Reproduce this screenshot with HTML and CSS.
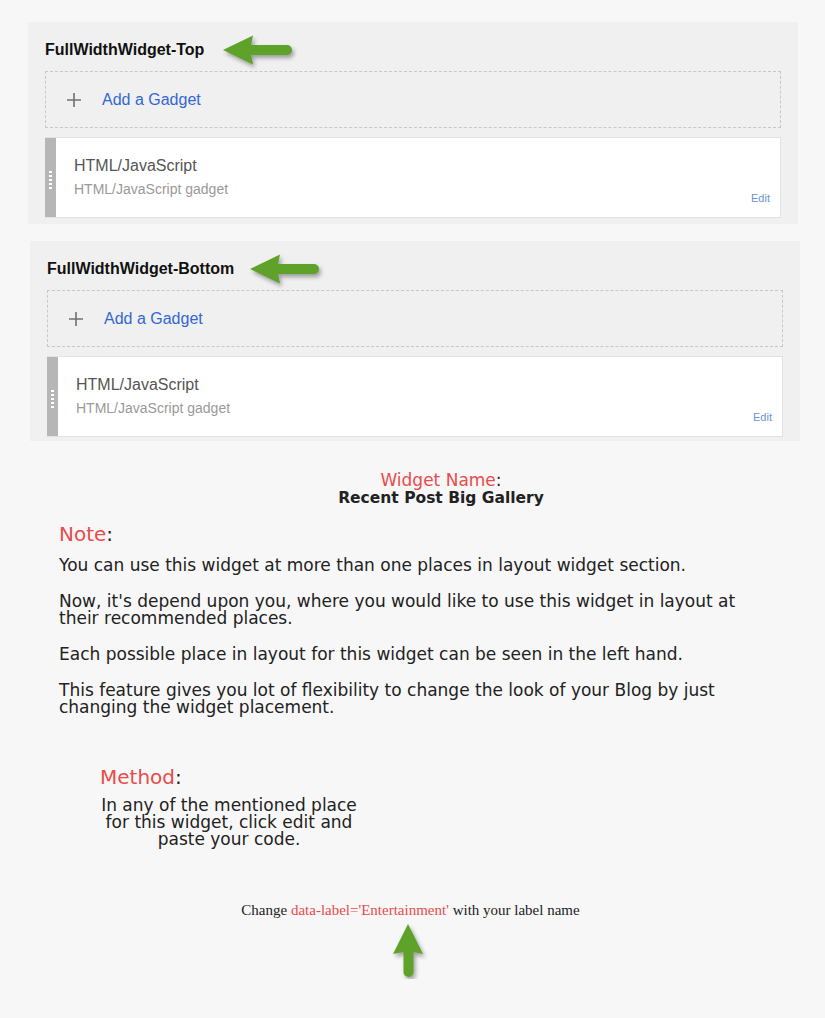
FILE: index.html
```html
<!DOCTYPE html>
<html>
<head>
<meta charset="utf-8">
<link rel="stylesheet" href="styles.css">
</head>
<body>
<div class="page">
  <section class="panel panel-top">
    <div class="panel-title">
      <span class="title-text">FullWidthWidget-Top</span>
      <svg class="arrow-left gap-top" width="72" height="32" viewBox="0 0 72 32"><path d="M1 16 L31 1.5 L29 11 L65 11 A5 5 0 0 1 65 21 L29 21 L31 30.5 Z" fill="#5fa22a"/></svg>
    </div>
    <div class="add-gadget"><span class="plus"><svg width="14" height="14" viewBox="0 0 14 14"><path d="M7 0 V14 M0 7 H14" stroke="#707070" stroke-width="1.6"/></svg></span><span class="add-text">Add a Gadget</span></div>
    <div class="gadget">
      <div class="grip"><i></i><i></i><i></i><i></i><i></i></div>
      <div class="gadget-body">
        <div class="gadget-name">HTML/JavaScript</div>
        <div class="gadget-sub">HTML/JavaScript gadget</div>
      </div>
      <a class="edit">Edit</a>
    </div>
  </section>

  <section class="panel panel-bottom">
    <div class="panel-title">
      <span class="title-text">FullWidthWidget-Bottom</span>
      <svg class="arrow-left gap-bottom" width="72" height="32" viewBox="0 0 72 32"><path d="M1 16 L31 1.5 L29 11 L65 11 A5 5 0 0 1 65 21 L29 21 L31 30.5 Z" fill="#5fa22a"/></svg>
    </div>
    <div class="add-gadget"><span class="plus"><svg width="14" height="14" viewBox="0 0 14 14"><path d="M7 0 V14 M0 7 H14" stroke="#707070" stroke-width="1.6"/></svg></span><span class="add-text">Add a Gadget</span></div>
    <div class="gadget">
      <div class="grip"><i></i><i></i><i></i><i></i><i></i></div>
      <div class="gadget-body">
        <div class="gadget-name">HTML/JavaScript</div>
        <div class="gadget-sub">HTML/JavaScript gadget</div>
      </div>
      <a class="edit">Edit</a>
    </div>
  </section>

  <div class="info">
    <div class="widget-name"><span class="red">Widget Name</span>:<br><b>Recent Post Big Gallery</b></div>
    <div class="note-head"><span class="red">Note</span>:</div>
    <div class="note">
      <p>You can use this widget at more than one places in layout widget section.</p>
      <p>Now, it's depend upon you, where you would like to use this widget in layout at their recommended places.</p>
      <p>Each possible place in layout for this widget can be seen in the left hand.</p>
      <p>This feature gives you lot of flexibility to change the look of your Blog by just changing the widget placement.</p>
    </div>
    <div class="method">
      <div class="method-head"><span class="red">Method</span>:</div>
      <p class="method-text">In any of the mentioned place for this widget, click edit and paste your code.</p>
    </div>
  </div>

  <div class="change">Change <span class="red">data-label='Entertainment'</span> with your label name</div>
  <svg class="arrow-up" width="34" height="56" viewBox="0 0 34 56"><path d="M16 1 L31 31 L21.5 29 L21.5 49 A5 5 0 0 1 11.5 49 L11.5 29 L1 31 Z" fill="#5fa22a"/></svg>
</div>
</body>
</html>
```

FILE: styles.css
```css
html, body {
  margin: 0;
  padding: 0;
  background: #f7f7f7;
}

.page {
  padding-top: 22px;
  font-family: "Liberation Sans", Arial, sans-serif;
}

.panel {
  background: #f0f0f0;
  width: 770px;
  box-sizing: border-box;
  padding: 13px 17px 0 17px;
  display: flex;
  flex-direction: column;
}

.panel-top {
  margin-left: 28px;
  height: 202px;
}

.panel-bottom {
  margin-left: 30px;
  margin-top: 17px;
  height: 200px;
}

.panel-title {
  height: 30px;
  margin-bottom: 6px;
  display: flex;
  align-items: center;
}

.title-text {
  font-weight: bold;
  font-size: 16px;
  color: #111;
}

.arrow-left {
  display: block;
  filter: drop-shadow(2px 3px 2px rgba(0, 0, 0, 0.35));
}

.gap-top { margin-left: 18px; }
.gap-bottom { margin-left: 15px; }

.add-gadget {
  height: 57px;
  box-sizing: border-box;
  border: 1px dashed #c8c8c8;
  display: flex;
  align-items: center;
  padding-left: 21px;
}

.plus {
  display: flex;
  width: 14px;
  height: 14px;
  margin-right: 21px;
}

.add-text {
  font-size: 16px;
  color: #3367d6;
}

.gadget {
  margin-top: 9px;
  height: 81px;
  box-sizing: border-box;
  background: #fff;
  border: 1px solid #e2e2e2;
  border-left: none;
  display: flex;
  position: relative;
}

.grip {
  width: 11px;
  background: #b6b6b6;
  display: flex;
  flex-direction: column;
  justify-content: center;
  align-items: center;
  gap: 2px;
  padding-top: 4px;
}

.grip i {
  display: block;
  width: 3px;
  height: 2px;
  background: #fff;
}

.gadget-body {
  padding-left: 18px;
  padding-top: 18px;
}

.gadget-name {
  font-size: 16px;
  color: #555;
  line-height: 20px;
}

.gadget-sub {
  font-size: 14px;
  color: #999;
  margin-top: 5px;
  line-height: 17px;
}

.edit {
  position: absolute;
  right: 10px;
  bottom: 13px;
  font-size: 11px;
  color: #6b93d6;
}

.info {
  font-family: "DejaVu Sans", Verdana, sans-serif;
  color: #222;
  padding-left: 59px;
}

.red {
  color: #ea4b4b;
}

.widget-name {
  margin-top: 31px;
  text-align: center;
  width: 764px;
  font-size: 17px;
  line-height: 17px;
}

.widget-name b {
  font-size: 15.5px;
}

.note-head {
  margin-top: 15px;
  font-size: 20px;
  line-height: 24px;
}

.note {
  width: 700px;
  font-size: 17px;
  line-height: 17px;
  padding-top: 11px;
}

.note p {
  margin: 0 0 19px 0;
}

.method {
  margin-left: 41px;
  margin-top: 49px;
}

.method-head {
  font-size: 20px;
  line-height: 24px;
}

.method-text {
  width: 258px;
  text-align: center;
  font-size: 17px;
  line-height: 17px;
  margin: 8px 0 0 0;
}

.change {
  margin-top: 54px;
  font-family: "Liberation Serif", "Times New Roman", serif;
  font-size: 15px;
  color: #222;
  text-align: center;
  padding-right: 4px;
  line-height: 17px;
}

.arrow-up {
  display: block;
  margin-left: 392px;
  margin-top: 4px;
  filter: drop-shadow(2px 3px 2px rgba(0, 0, 0, 0.35));
}
```
